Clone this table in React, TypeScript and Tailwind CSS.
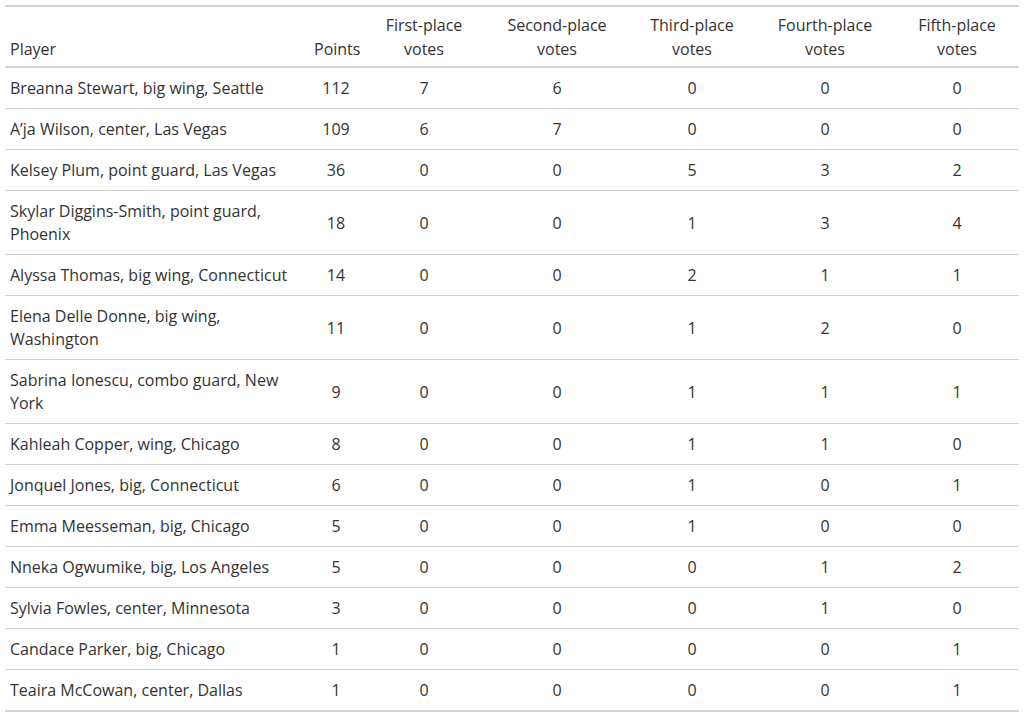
const rows: [string, number, number, number, number, number, number][] = [
  ['Breanna Stewart, big wing, Seattle', 112, 7, 6, 0, 0, 0],
  ['A’ja Wilson, center, Las Vegas', 109, 6, 7, 0, 0, 0],
  ['Kelsey Plum, point guard, Las Vegas', 36, 0, 0, 5, 3, 2],
  ['Skylar Diggins-Smith, point guard, Phoenix', 18, 0, 0, 1, 3, 4],
  ['Alyssa Thomas, big wing, Connecticut', 14, 0, 0, 2, 1, 1],
  ['Elena Delle Donne, big wing, Washington', 11, 0, 0, 1, 2, 0],
  ['Sabrina Ionescu, combo guard, New York', 9, 0, 0, 1, 1, 1],
  ['Kahleah Copper, wing, Chicago', 8, 0, 0, 1, 1, 0],
  ['Jonquel Jones, big, Connecticut', 6, 0, 0, 1, 0, 1],
  ['Emma Meesseman, big, Chicago', 5, 0, 0, 1, 0, 0],
  ['Nneka Ogwumike, big, Los Angeles', 5, 0, 0, 0, 1, 2],
  ['Sylvia Fowles, center, Minnesota', 3, 0, 0, 0, 1, 0],
  ['Candace Parker, big, Chicago', 1, 0, 0, 0, 0, 1],
  ['Teaira McCowan, center, Dallas', 1, 0, 0, 0, 0, 1],
];

const headers = ['First-place', 'Second-place', 'Third-place', 'Fourth-place', 'Fifth-place'];

export default function App() {
  return (
    <div className="bg-white min-h-screen pt-[5px] px-[5px] text-[#333333] font-['Open_Sans',sans-serif] text-[16px]">
      <table className="table-fixed border-collapse w-[1014px] border-t-2 border-b-2 border-[#D3D3D3]">
        <colgroup>
          <col className="w-[304px]" />
          <col className="w-[54px]" />
          <col className="w-[122px]" />
          <col className="w-[144px]" />
          <col className="w-[126px]" />
          <col className="w-[140px]" />
          <col className="w-[124px]" />
        </colgroup>
        <thead>
          <tr className="border-b-2 border-[#D3D3D3]">
            <th className="font-normal text-left align-bottom px-[5px] pt-[6px] pb-[5px] leading-[24px]">Player</th>
            <th className="font-normal text-center align-bottom px-[5px] pt-[6px] pb-[5px] leading-[24px]">Points</th>
            {headers.map((h) => (
              <th key={h} className="font-normal text-center align-bottom px-[5px] pt-[6px] pb-[5px] leading-[24px]">
                {h}
                <br />
                votes
              </th>
            ))}
          </tr>
        </thead>
        <tbody>
          {rows.map((r) => (
            <tr key={r[0]} className="border-b border-[#D3D3D3] last:border-b-0">
              <td className="text-left align-middle px-[5px] pt-[9px] pb-[8px] leading-[23px]">{r[0]}</td>
              {r.slice(1).map((v, i) => (
                <td key={i} className="text-center align-middle px-[5px] pt-[9px] pb-[8px] leading-[23px]">
                  {v}
                </td>
              ))}
            </tr>
          ))}
        </tbody>
      </table>
    </div>
  );
}
